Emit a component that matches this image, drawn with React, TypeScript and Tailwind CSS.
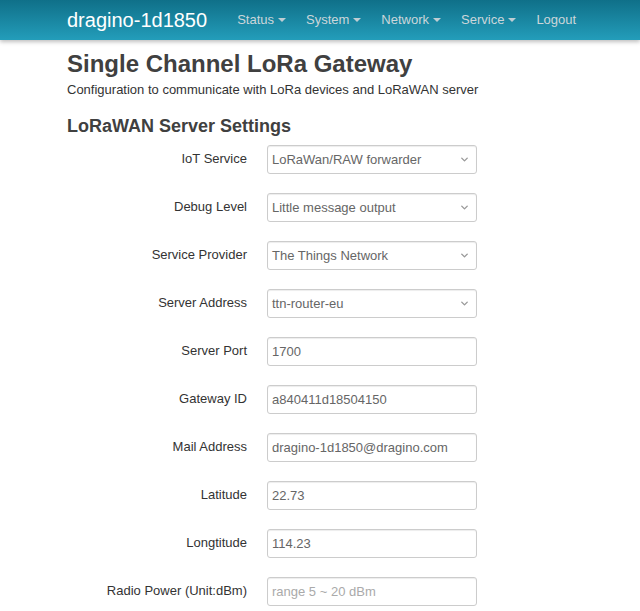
import { ChevronDown } from "lucide-react";

type Field = { label: string; value: string; kind: "select" | "input" | "placeholder" };

const FIELDS: Field[] = [
  { label: "IoT Service", value: "LoRaWan/RAW forwarder", kind: "select" },
  { label: "Debug Level", value: "Little message output", kind: "select" },
  { label: "Service Provider", value: "The Things Network", kind: "select" },
  { label: "Server Address", value: "ttn-router-eu", kind: "select" },
  { label: "Server Port", value: "1700", kind: "input" },
  { label: "Gateway ID", value: "a840411d18504150", kind: "input" },
  { label: "Mail Address", value: "dragino-1d1850@dragino.com", kind: "input" },
  { label: "Latitude", value: "22.73", kind: "input" },
  { label: "Longtitude", value: "114.23", kind: "input" },
  { label: "Radio Power (Unit:dBm)", value: "range 5 ~ 20 dBm", kind: "placeholder" },
];

const NAV = ["Status", "System", "Network", "Service"];

export default function App() {
  return (
    <div className="min-h-[611px] bg-white font-['Liberation_Sans',Arial,sans-serif] text-[#404040]">
      <header className="h-10 bg-gradient-to-b from-[#0f7089] to-[#239dba] shadow-[0_2px_4px_rgba(0,0,0,0.25)]">
        <div className="flex h-full items-center pl-[67px]">
          <span className="text-[20px] leading-none text-white">dragino-1d1850</span>
          <nav className="ml-[30px] flex items-center gap-[20px] text-[13px] text-[#ccd6da]">
            {NAV.map((item) => (
              <span key={item} className="flex items-center">
                {item}
                <span className="ml-[4px] inline-block h-0 w-0 border-x-[4px] border-t-[4px] border-x-transparent border-t-[#bfcdd3]" />
              </span>
            ))}
            <span>Logout</span>
          </nav>
        </div>
      </header>

      <main className="pl-[67px] pt-[10px]">
        <h1 className="text-[24px] font-bold leading-[28px] text-[#404040]">Single Channel LoRa Gateway</h1>
        <p className="mt-[4px] text-[13px] leading-[16px] text-[#333]">
          Configuration to communicate with LoRa devices and LoRaWAN server
        </p>
        <h2 className="mt-[17px] text-[18px] font-bold leading-[22px] text-[#404040]">LoRaWAN Server Settings</h2>

        <div className="mt-[8px] flex flex-col gap-[19px]">
          {FIELDS.map((f) => (
            <div key={f.label} className="flex items-center">
              <label className="w-[180px] pb-[2px] text-right text-[13px] text-[#333]">{f.label}</label>
              <div className="ml-[20px] flex h-[29px] w-[210px] items-center rounded-[3px] border border-[#ccc] px-[4px] shadow-[inset_0_1px_1px_rgba(0,0,0,0.075)]">
                <span
                  className={
                    f.kind === "placeholder"
                      ? "flex-1 text-[13px] text-[#aaa]"
                      : "flex-1 text-[13px] text-[#666]"
                  }
                >
                  {f.value}
                </span>
                {f.kind === "select" && (
                  <ChevronDown size={11} strokeWidth={3} className="mr-[2px] text-[#999]" />
                )}
              </div>
            </div>
          ))}
        </div>
      </main>
    </div>
  );
}
